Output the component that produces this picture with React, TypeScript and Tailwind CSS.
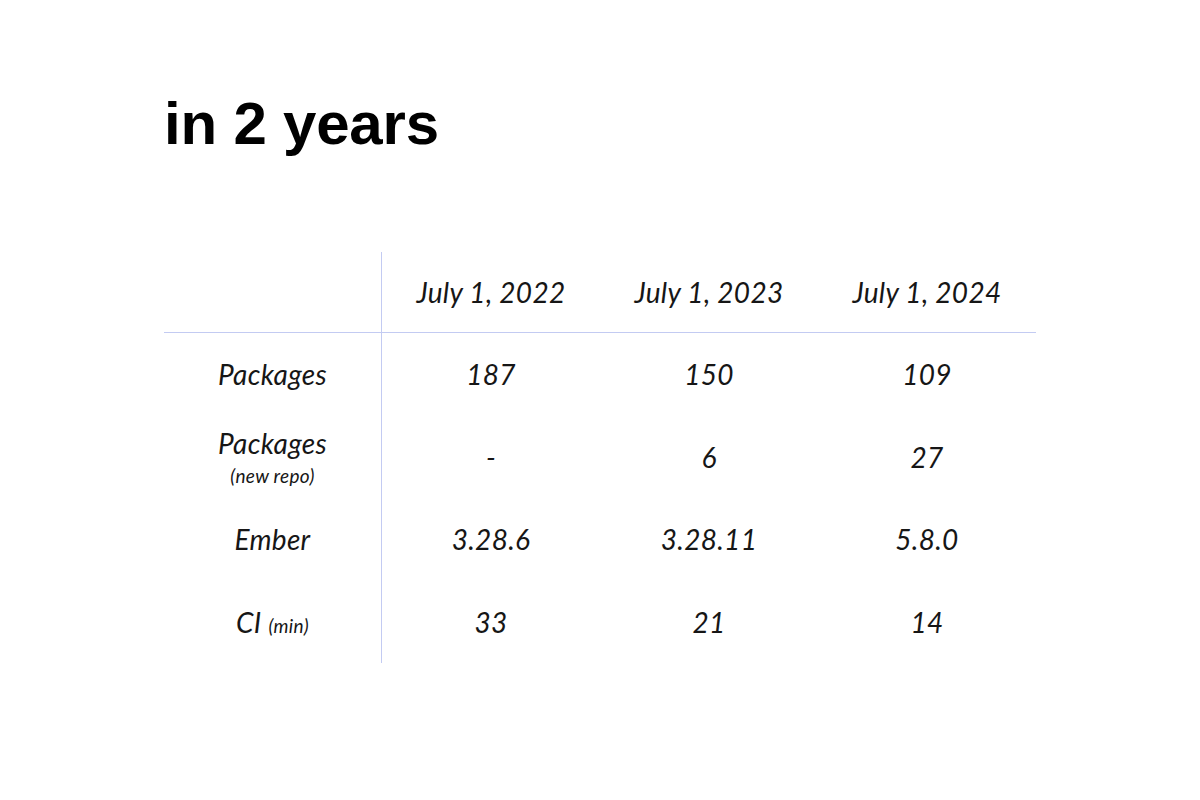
import React from "react";

const rows: { label: React.ReactNode; values: string[] }[] = [
  { label: <span>Packages</span>, values: ["187", "150", "109"] },
  {
    label: (
      <span className="flex flex-col items-center leading-none">
        <span>Packages</span>
        <span className="text-[19px] mt-[9px]">(new repo)</span>
      </span>
    ),
    values: ["-", "6", "27"],
  },
  { label: <span>Ember</span>, values: ["3.28.6", "3.28.11", "5.8.0"] },
  {
    label: (
      <span>
        CI <span className="text-[19px]">(min)</span>
      </span>
    ),
    values: ["33", "21", "14"],
  },
];

const headers = ["July 1, 2022", "July 1, 2023", "July 1, 2024"];

export default function App() {
  return (
    <div className="w-[1200px] h-[800px] bg-white text-black overflow-hidden">
      <div className="pl-[164px] pt-[94px]">
        <h1
          className="text-[60px] leading-[60px] font-bold tracking-[-0.2px]"
          style={{ fontFamily: '"Liberation Sans", Arial, sans-serif' }}
        >
          in 2 years
        </h1>
        <div
          className="mt-[98px] grid grid-cols-[218px_218px_218px_218px] italic font-normal text-[28px] tracking-[0.3px] text-[#161616]"
          style={{ fontFamily: 'Lato, "Open Sans", sans-serif' }}
        >
          <div className="h-[81px] border-r border-b border-[#c3cbf2]" />
          {headers.map((h) => (
            <div
              key={h}
              className="h-[81px] border-b border-[#c3cbf2] flex items-center justify-center"
            >
              {h}
            </div>
          ))}
          {rows.map((r, i) => (
            <React.Fragment key={i}>
              <div className="h-[82.5px] border-r border-[#c3cbf2] flex items-center justify-center">
                {r.label}
              </div>
              {r.values.map((v, j) => (
                <div key={j} className="h-[82.5px] flex items-center justify-center">
                  {v}
                </div>
              ))}
            </React.Fragment>
          ))}
        </div>
      </div>
    </div>
  );
}
